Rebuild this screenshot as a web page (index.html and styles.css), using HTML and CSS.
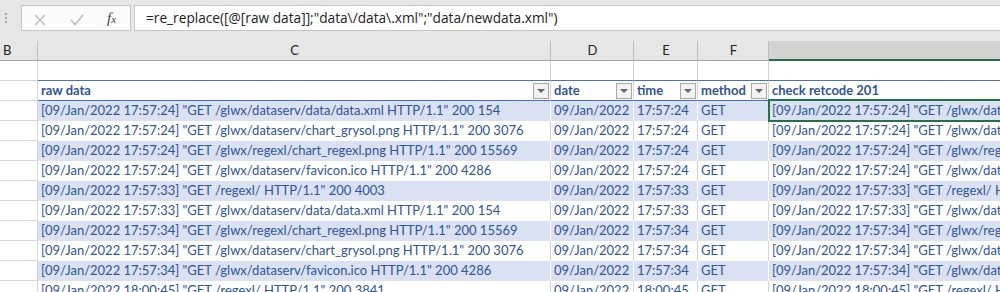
FILE: index.html
```html
<!DOCTYPE html>
<html lang="en">
<head>
    <meta charset="UTF-8">
    <title>re_replace log table</title>
    <link rel="stylesheet" href="styles.css">
</head>
<body>
    <div class="toolbar">
        <div class="grip"><span></span><span></span><span></span></div>
        <div class="fx-box">
            <svg class="btn-cancel" width="12" height="12" viewBox="0 0 12 12">
                <path d="M1 1 L11 11 M11 1 L1 11" stroke="#bcbcbc" stroke-width="1.4" fill="none"/>
            </svg>
            <svg class="btn-enter" width="14" height="12" viewBox="0 0 14 12">
                <path d="M1 6 L5 10.5 L13 1" stroke="#bcbcbc" stroke-width="1.6" fill="none"/>
            </svg>
            <span class="fx">f<span>x</span></span>
        </div>
        <div class="formula">=re_replace([@[raw data]];"data\/data\.xml";"data/newdata.xml")</div>
    </div>

    <div class="sheet">
        <!-- column letters -->
        <div class="row heads">
            <div class="cell letter-b">B</div>
            <div class="cell">C</div>
            <div class="cell">D</div>
            <div class="cell">E</div>
            <div class="cell">F</div>
            <div class="cell sel"></div>
        </div>

        <div class="row blank">
            <div class="cell"></div>
            <div class="cell"></div>
            <div class="cell"></div>
            <div class="cell"></div>
            <div class="cell"></div>
            <div class="cell"></div>
        </div>

        <!-- table header -->
        <div class="row thead">
            <div class="cell"></div>
            <div class="cell"><span>raw data</span><i class="filter"></i></div>
            <div class="cell"><span>date</span><i class="filter"></i></div>
            <div class="cell"><span>time</span><i class="filter"></i></div>
            <div class="cell"><span>method</span><i class="filter"></i></div>
            <div class="cell"><span>check retcode 201</span></div>
        </div>

        <div class="row band">
            <div class="cell"></div>
            <div class="cell">[09/Jan/2022 17:57:24] "GET /glwx/dataserv/data/data.xml HTTP/1.1" 200 154</div>
            <div class="cell">09/Jan/2022</div>
            <div class="cell">17:57:24</div>
            <div class="cell">GET</div>
            <div class="cell active">[09/Jan/2022 17:57:24] "GET /glwx/dataserv/data/newdata.xml HTTP/1.1" 200 154</div>
        </div>
        <div class="row">
            <div class="cell"></div>
            <div class="cell">[09/Jan/2022 17:57:24] "GET /glwx/dataserv/chart_grysol.png HTTP/1.1" 200 3076</div>
            <div class="cell">09/Jan/2022</div>
            <div class="cell">17:57:24</div>
            <div class="cell">GET</div>
            <div class="cell">[09/Jan/2022 17:57:24] "GET /glwx/dataserv/chart_grysol.png HTTP/1.1" 200 3076</div>
        </div>
        <div class="row band">
            <div class="cell"></div>
            <div class="cell">[09/Jan/2022 17:57:24] "GET /glwx/regexl/chart_regexl.png HTTP/1.1" 200 15569</div>
            <div class="cell">09/Jan/2022</div>
            <div class="cell">17:57:24</div>
            <div class="cell">GET</div>
            <div class="cell">[09/Jan/2022 17:57:24] "GET /glwx/regexl/chart_regexl.png HTTP/1.1" 200 15569</div>
        </div>
        <div class="row">
            <div class="cell"></div>
            <div class="cell">[09/Jan/2022 17:57:24] "GET /glwx/dataserv/favicon.ico HTTP/1.1" 200 4286</div>
            <div class="cell">09/Jan/2022</div>
            <div class="cell">17:57:24</div>
            <div class="cell">GET</div>
            <div class="cell">[09/Jan/2022 17:57:24] "GET /glwx/dataserv/favicon.ico HTTP/1.1" 200 4286</div>
        </div>
        <div class="row band">
            <div class="cell"></div>
            <div class="cell">[09/Jan/2022 17:57:33] "GET /regexl/ HTTP/1.1" 200 4003</div>
            <div class="cell">09/Jan/2022</div>
            <div class="cell">17:57:33</div>
            <div class="cell">GET</div>
            <div class="cell">[09/Jan/2022 17:57:33] "GET /regexl/ HTTP/1.1" 200 4003</div>
        </div>
        <div class="row">
            <div class="cell"></div>
            <div class="cell">[09/Jan/2022 17:57:33] "GET /glwx/dataserv/data/data.xml HTTP/1.1" 200 154</div>
            <div class="cell">09/Jan/2022</div>
            <div class="cell">17:57:33</div>
            <div class="cell">GET</div>
            <div class="cell">[09/Jan/2022 17:57:33] "GET /glwx/dataserv/data/newdata.xml HTTP/1.1" 200 154</div>
        </div>
        <div class="row band">
            <div class="cell"></div>
            <div class="cell">[09/Jan/2022 17:57:34] "GET /glwx/regexl/chart_regexl.png HTTP/1.1" 200 15569</div>
            <div class="cell">09/Jan/2022</div>
            <div class="cell">17:57:34</div>
            <div class="cell">GET</div>
            <div class="cell">[09/Jan/2022 17:57:34] "GET /glwx/regexl/chart_regexl.png HTTP/1.1" 200 15569</div>
        </div>
        <div class="row">
            <div class="cell"></div>
            <div class="cell">[09/Jan/2022 17:57:34] "GET /glwx/dataserv/chart_grysol.png HTTP/1.1" 200 3076</div>
            <div class="cell">09/Jan/2022</div>
            <div class="cell">17:57:34</div>
            <div class="cell">GET</div>
            <div class="cell">[09/Jan/2022 17:57:34] "GET /glwx/dataserv/chart_grysol.png HTTP/1.1" 200 3076</div>
        </div>
        <div class="row band">
            <div class="cell"></div>
            <div class="cell">[09/Jan/2022 17:57:34] "GET /glwx/dataserv/favicon.ico HTTP/1.1" 200 4286</div>
            <div class="cell">09/Jan/2022</div>
            <div class="cell">17:57:34</div>
            <div class="cell">GET</div>
            <div class="cell">[09/Jan/2022 17:57:34] "GET /glwx/dataserv/favicon.ico HTTP/1.1" 200 4286</div>
        </div>
        <div class="row">
            <div class="cell"></div>
            <div class="cell">[09/Jan/2022 18:00:45] "GET /regexl/ HTTP/1.1" 200 3841</div>
            <div class="cell">09/Jan/2022</div>
            <div class="cell">18:00:45</div>
            <div class="cell">GET</div>
            <div class="cell">[09/Jan/2022 18:00:45] "GET /regexl/ HTTP/1.1" 200 3841</div>
        </div>
    </div>
</body>
</html>
```

FILE: styles.css
```css
* {
    box-sizing: border-box;
}

body {
    margin: 0;
    background-color: #fff;
    font-family: 'Lato', 'Liberation Sans', sans-serif;
    overflow: hidden;
}

/* formula bar */
.toolbar {
    display: flex;
    align-items: flex-start;
    height: 41px;
    padding-top: 5px;
    background-color: #e6e6e6;
}

.grip {
    width: 21px;
    display: flex;
    flex-direction: column;
    gap: 2px;
    padding: 8px 0 0 5px;
}

.grip span {
    width: 2px;
    height: 2px;
    background-color: #a8a8a8;
}

.fx-box {
    width: 110px;
    height: 26px;
    border: 1px solid #c6c6c6;
    background-color: #fbfbfb;
    display: flex;
    align-items: center;
    padding-left: 12px;
}

.btn-cancel {
    margin-top: 3px;
}

.btn-enter {
    margin: 3px 0 0 24px;
}

.fx {
    margin-left: 23px;
    font-family: 'Liberation Serif', serif;
    font-style: italic;
    font-size: 15px;
    color: #444;
}

.fx span {
    font-size: 11px;
}

.formula {
    flex: 1;
    height: 26px;
    margin-left: 3px;
    border: 1px solid #c6c6c6;
    border-right: none;
    background-color: #fff;
    padding-left: 11px;
    font-family: 'Open Sans', sans-serif;
    font-size: 13.7px;
    line-height: 24px;
    color: #222;
    white-space: nowrap;
}

/* grid */
.sheet {
    overflow: hidden;
}

.row {
    display: grid;
    grid-template-columns: 38px 513px 83px 64px 71px minmax(0, 1fr);
    height: 20px;
}

.cell {
    border-right: 1px solid #d4d4d4;
    overflow: hidden;
    white-space: nowrap;
    padding: 0 2px 0 3px;
    font-size: 13px;
    line-height: 19px;
    color: #2f5597;
}

.cell:last-child {
    border-right: none;
}

.row .cell:first-child {
    border-bottom: 1px solid #d4d4d4;
}

.heads .cell {
    background-color: #e6e6e6;
    border-right-color: #bdbdbd;
    border-bottom: 1px solid #a6a6a6;
    text-align: center;
    color: #222;
}

.heads .cell:first-child {
    border-bottom-color: #a6a6a6;
}

.heads .letter-b {
    text-align: left;
}

.heads .sel {
    background-color: #d2d2d2;
    border-bottom: 2px solid #217346;
}

.blank .cell:not(:first-child),
.thead .cell:not(:first-child) {
    border-bottom: 1px solid #4472c4;
}

.thead .cell {
    display: flex;
    justify-content: space-between;
    align-items: flex-end;
    padding-right: 1px;
    font-weight: bold;
}

.thead .cell span {
    align-self: stretch;
}

.filter {
    position: relative;
    flex: none;
    width: 16px;
    height: 16px;
    margin-bottom: 1px;
    border: 1px solid #a6a6a6;
    background-color: #f2f2f2;
}

.filter::after {
    content: '';
    position: absolute;
    left: 3px;
    top: 5px;
    border-left: 4px solid transparent;
    border-right: 4px solid transparent;
    border-top: 4px solid #666;
}

.band .cell:not(:first-child) {
    background-color: #d9e1f2;
    border-right-color: #fff;
}

.active {
    position: relative;
    overflow: visible;
}

.active::after {
    content: '';
    position: absolute;
    left: -1px;
    top: -2px;
    right: -4px;
    bottom: -1px;
    border: 2px solid #217346;
}
```
